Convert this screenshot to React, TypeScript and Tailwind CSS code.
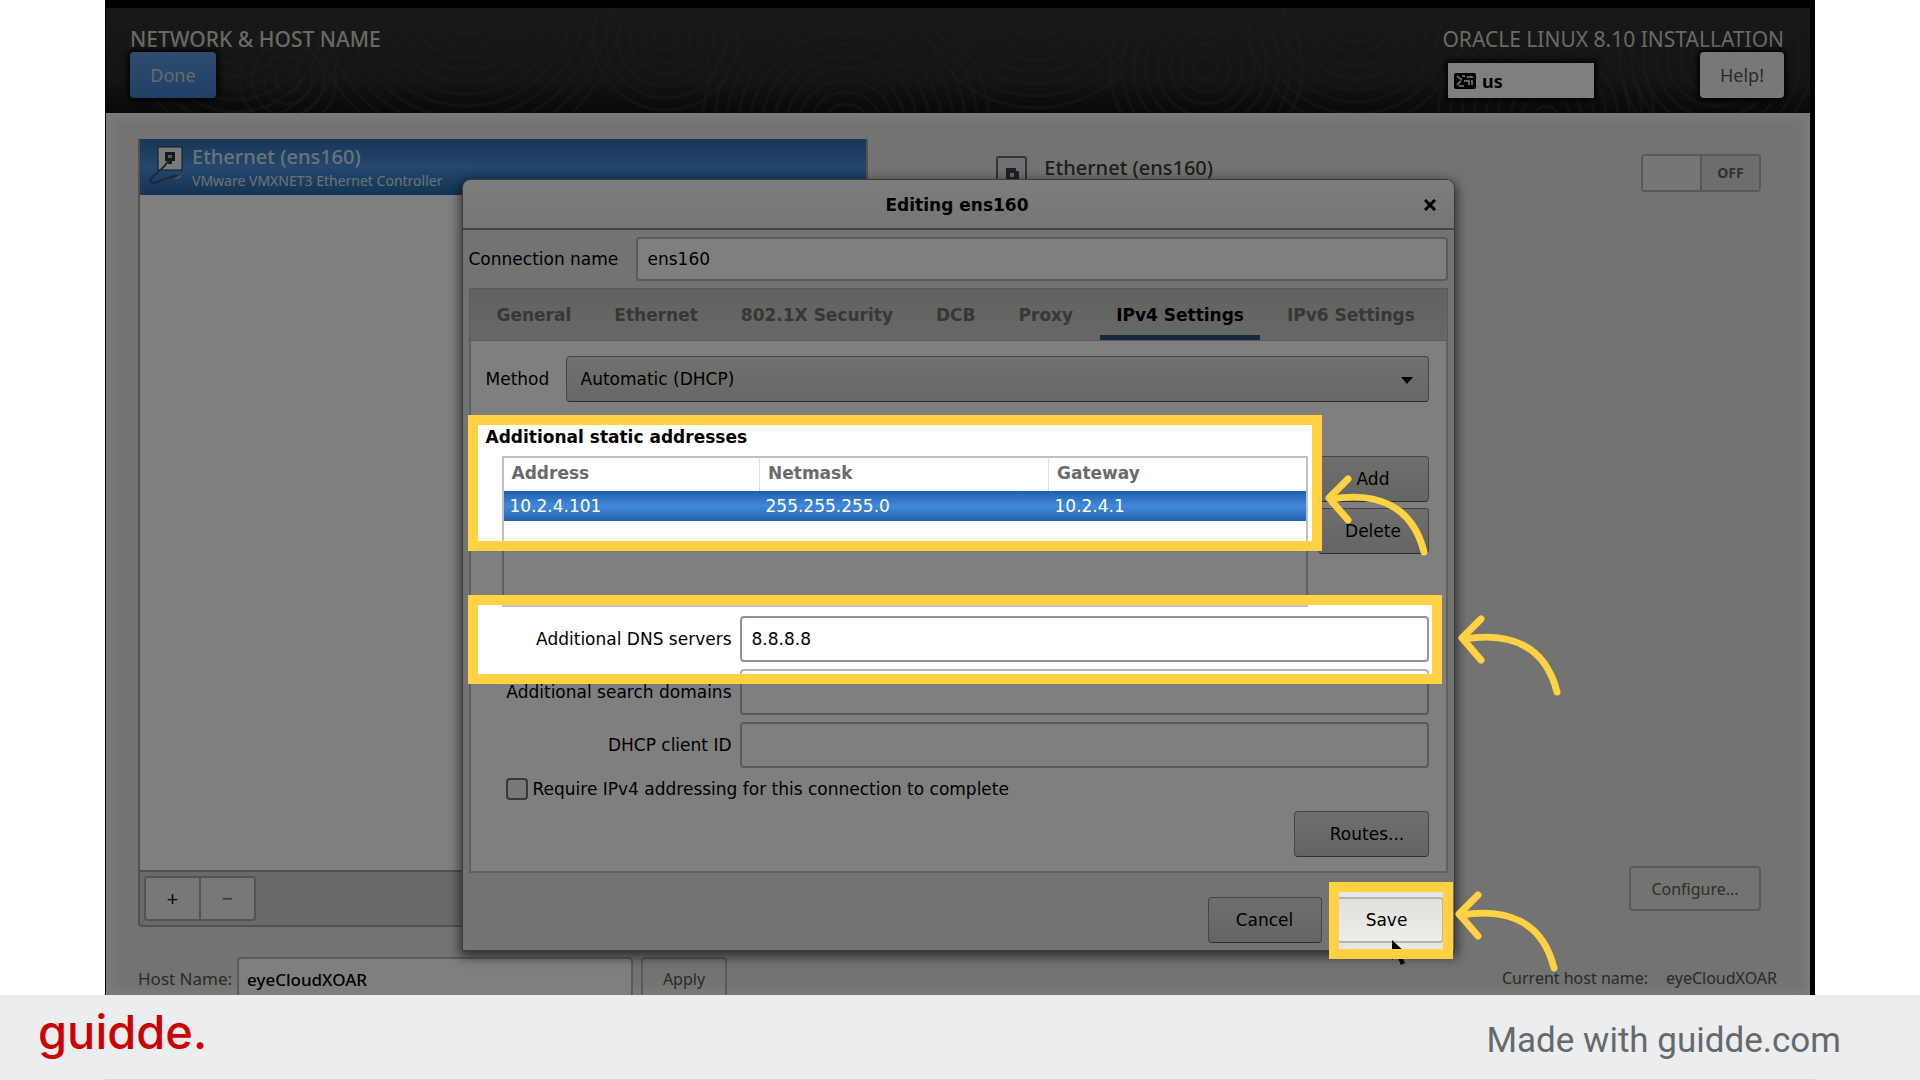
import React from 'react';

type Box = { id: string; left: number; top: number; width: number; height: number; arrowLeft: number; arrowTop: number };

// Horizontal values are measured from the centre of the screen
const highlights: Box[] = [
  { id: 'addresses', left: -492, top: 415, width: 854, height: 136, arrowLeft: 365, arrowTop: 474 },
  { id: 'dns', left: -492, top: 595, width: 974, height: 89, arrowLeft: 498, arrowTop: 614 },
  { id: 'save', left: 369, top: 882, width: 124, height: 77, arrowLeft: 495, arrowTop: 890 },
];

const tabs = ['General', 'Ethernet', '802.1X Security', 'DCB', 'Proxy', 'IPv4 Settings', 'IPv6 Settings'];

const addresses = [{ address: '10.2.4.101', netmask: '255.255.255.0', gateway: '10.2.4.1' }];

const rings = [
  { cx: 130, cy: 20, count: 9 },
  { cx: 182, cy: 72, count: 4 },
  { cx: 360, cy: -10, count: 13 },
  { cx: 560, cy: 30, count: 6 },
  { cx: 740, cy: 120, count: 12 },
  { cx: 930, cy: -20, count: 10 },
  { cx: 1100, cy: 60, count: 8 },
  { cx: 1250, cy: 10, count: 9 },
  { cx: 1440, cy: 110, count: 9 },
  { cx: 1610, cy: 50, count: 8 },
];

const holes = highlights
  .map((b) => {
    const l = `calc(50% + ${b.left}px)`;
    const r = `calc(50% + ${b.left + b.width}px)`;
    const t = `${b.top}px`;
    const bt = `${b.top + b.height}px`;
    return `${l} ${t}, ${r} ${t}, ${r} ${bt}, ${l} ${bt}, ${l} ${t}, 0 0`;
  })
  .join(', ');

const dimClip = `polygon(evenodd, 0 0, 100% 0, 100% 100%, 0 100%, 0 0, ${holes})`;

const dialogButton =
  'h-[46px] rounded border border-[#8a8a86] border-b-[#5c5c58] bg-linear-to-b from-[#dededb] to-[#c9c9c5] text-center text-black';

const field = 'w-full rounded border-2 border-[#b4b4b0] bg-white px-2.5 text-black outline-none';

const EthernetIcon: React.FC = () => (
  <svg className="mt-1 h-12 w-10 shrink-0" viewBox="0 0 40 48" fill="none">
    <rect x="12" y="4" width="24" height="23" fill="#f4f4f0" stroke="#20303c" strokeWidth="1" />
    <path d="M19 9h10v9h-3v3h-4v-3h-3z" fill="#26323a" />
    <path d="M22 12h4v3h-4z" fill="#aab4ba" />
    <path d="M22 18C17 28 5 32 4 38c0 4 8 1 15-2s11-4 16-2" stroke="#3c5368" strokeWidth="2" />
    <path d="M29 36l6-3" stroke="#8fa9be" strokeWidth="2" />
  </svg>
);

const PortIcon: React.FC = () => (
  <svg className="h-10 w-9 shrink-0" viewBox="0 0 36 40" fill="none">
    <path d="M3 40V5q0-2 2-2h25q2 0 2 2v35" fill="#e2e2de" stroke="#6a6a66" strokeWidth="2" />
    <path d="M12 28V14h10v3h3v11" fill="#39424e" />
    <path d="M16 19h4v4h-4z" fill="#c5ccd4" />
  </svg>
);

const Arrow: React.FC = () => (
  <svg className="h-[84px] w-[104px]" viewBox="0 0 104 84" fill="none" stroke="#ffd143" strokeLinecap="round" strokeLinejoin="round">
    <path d="M23 5L4 24L23 46" strokeWidth="7" />
    <path d="M6 25C50 18 87 30 99 78" strokeWidth="7" />
  </svg>
);

const Header: React.FC = () => (
  <header className="relative flex h-[105px] shrink-0 justify-between bg-linear-to-b from-[#32312d] via-[#292825] via-70% to-[#131211] pr-[26px] pl-6 text-[#d2d2d2]">
    <svg className="absolute inset-0 h-full w-full" fill="none" stroke="#3b3a36" strokeWidth="3" aria-hidden="true">
      {rings.map((r) =>
        Array.from({ length: r.count }, (_, i) => (
          <circle key={`${r.cx}-${i}`} cx={r.cx} cy={r.cy} r={12 + i * 12} opacity="0.4" />
        ))
      )}
    </svg>
    <div className="relative flex flex-col items-start pt-4">
      <h1 className="h-7 text-[21px] leading-[30px] font-medium">NETWORK &amp; HOST NAME</h1>
      <button className="h-[46px] w-[86px] rounded-sm bg-linear-to-b from-[#5c9be0] to-[#3f82cc] text-lg shadow-[0_0_6px_2px_#000]">
        Done
      </button>
    </div>
    <div className="relative flex w-[336px] flex-col pt-4">
      <div className="flex h-7 justify-end text-[21px] leading-[30px] whitespace-nowrap">ORACLE LINUX 8.10 INSTALLATION</div>
      <div className="flex items-end justify-between">
        <button className="flex h-[35px] w-[146px] items-center gap-1.5 bg-white pl-1.5 text-lg font-bold text-black shadow-[0_0_6px_2px_#000]">
          <svg className="h-4 w-[22px]" viewBox="0 0 22 16" fill="none">
            <rect width="22" height="16" rx="2" fill="#000" />
            <path d="M3 3l5 4M3 12l4-4M8 3h3M13 4h6M10 8h5v4M18 7v5M5 13h5" stroke="#ccc" strokeWidth="2" />
          </svg>
          us
        </button>
        <button className="h-[46px] w-[84px] rounded-sm bg-[#f0f0ee] text-lg text-[#55554f] shadow-[0_0_6px_2px_#000]">
          Help!
        </button>
      </div>
    </div>
  </header>
);

const NetworkPage: React.FC = () => (
  <main className="flex min-h-0 flex-1 flex-col bg-[#e6e6e2] pt-[26px] pr-[49px] pl-8 text-[#3c3c3a] shadow-[inset_0_0_12px_4px_#fafafa]">
    <div className="flex min-h-0 flex-1 gap-[126px]">
      <section className="flex w-[45%] flex-col">
        <ul className="flex-1 border-x-2 border-[#a2a29e] bg-white">
          <li className="flex h-14 items-start gap-1.5 bg-linear-to-b from-[#2f6cb0] via-[#488fdc] to-[#2a66a8] pl-1.5 text-[#d8e4ee]">
            <EthernetIcon />
            <div>
              <div className="mt-1 h-7 text-xl leading-7 font-medium">Ethernet (ens160)</div>
              <div className="text-sm leading-5">VMware VMXNET3 Ethernet Controller</div>
            </div>
          </li>
        </ul>
        <div className="h-[57px] rounded-b border-2 border-[#a2a29e] bg-[#d2d2ce] p-1">
          <div className="flex h-[45px] w-28 rounded border-2 border-[#a8a8a4] bg-[#f0f0ee] text-xl text-black">
            <button className="flex-1 border-r-2 border-[#a8a8a4]" aria-label="Add device">+</button>
            <button className="flex-1 text-[#70706c]" aria-label="Remove device">−</button>
          </div>
        </div>
      </section>
      <section className="flex flex-1 flex-col justify-between">
        <div className="flex items-start justify-between pt-[15px]">
          <div className="flex gap-3.5">
            <PortIcon />
            <h2 className="text-xl leading-7 font-medium">Ethernet (ens160)</h2>
          </div>
          <button
            role="switch"
            aria-checked="false"
            aria-label="Ethernet (ens160)"
            className="flex h-[38px] w-[120px] rounded-sm border-2 border-[#b0b0ac] text-sm font-bold text-[#63635f]"
          >
            <span className="h-full flex-1 border-r-2 border-[#b0b0ac] bg-[#ececea]"></span>
            <span className="flex h-full flex-1 items-center justify-center bg-[#dadad6]">OFF</span>
          </button>
        </div>
        <button className="mb-4 h-[45px] w-[132px] self-end rounded border-2 border-[#b4b4b0] text-base text-[#5c5c58]">
          Configure...
        </button>
      </section>
    </div>
    <div className="-mr-6 mt-[30px] flex h-[38px] items-start overflow-hidden text-base text-[#55554f]">
      <label htmlFor="hostname" className="w-[99px] text-[17px] leading-[43px]">
        Host Name:
      </label>
      <input
        id="hostname"
        defaultValue="eyeCloudXOAR"
        className="h-11 w-[396px] rounded border-2 border-[#b4b4b0] bg-white px-2 text-[17px] font-medium text-black outline-none"
      />
      <button className="ml-2 h-11 w-[86px] rounded border-2 border-[#b4b4b0]">Apply</button>
      <div className="mr-2 ml-auto flex gap-[18px] leading-[43px]">
        <span>Current host name:</span>
        <span>eyeCloudXOAR</span>
      </div>
    </div>
  </main>
);

const EditDialog: React.FC = () => (
  <div
    role="dialog"
    aria-labelledby="dialog-title"
    className="w-[991px] rounded-t-lg bg-[#e6e6e2] font-['DejaVu_Sans',sans-serif] text-[17px] leading-6 text-black shadow-[0_4px_12px_3px_rgba(0,0,0,0.6)] ring-1 ring-[#777]"
  >
    <div className="flex h-[50px] items-center rounded-t-lg border-b-2 border-[#8a8a86] bg-linear-to-b from-[#fafafa] to-[#ececea] px-4 pt-0.5">
      <h2 id="dialog-title" className="flex-1 pl-3.5 text-center font-bold">
        Editing ens160
      </h2>
      <button aria-label="Close" className="flex h-6 w-4 items-center justify-center">
        <svg className="h-3 w-3" viewBox="0 0 12 12" stroke="#000" strokeWidth="3">
          <path d="M1 1l10 10M11 1L1 11" />
        </svg>
      </button>
    </div>

    <div className="px-1.5 pt-[7px]">
      <div className="flex items-center">
        <label htmlFor="connection" className="w-[167px] shrink-0">
          Connection name
        </label>
        <input id="connection" defaultValue="ens160" className={`${field} h-11`} />
      </div>

      <div role="tablist" className="mt-[7px] flex h-[53px] gap-[11px] border border-[#b4b4b0] bg-linear-to-b from-[#c4c4c0] to-[#d0d0cc] px-[11px] font-bold text-[#6e6e6a]">
        {tabs.map((tab) => {
          const active = tab === 'IPv4 Settings';
          return (
            <button
              key={tab}
              role="tab"
              aria-selected={active}
              className={`border-b-[5px] px-4 pt-1.5 whitespace-nowrap ${active ? 'border-[#2c5382] text-black' : 'border-transparent'}`}
            >
              {tab}
            </button>
          );
        })}
      </div>

      <div className="border-x-2 border-b-2 border-[#c0c0bc] bg-white pt-[15px] pr-[17px] pb-3.5 pl-[15px]">
        <div className="flex items-center">
          <label htmlFor="method" className="w-20 shrink-0">
            Method
          </label>
          <div className="relative flex-1">
            <select
              id="method"
              className="h-[46px] w-full appearance-none rounded border border-[#8a8a86] border-b-[#5c5c58] bg-linear-to-b from-[#e2e2df] to-[#cfcfcb] px-3.5 text-black outline-none"
            >
              <option>Automatic (DHCP)</option>
            </select>
            <svg className="pointer-events-none absolute top-5 right-4 h-2 w-3" viewBox="0 0 12 8">
              <path d="M0 1h12L6 8z" fill="#000" />
            </svg>
          </div>
        </div>

        <h3 className="mt-[23px] font-bold">Additional static addresses</h3>
        <div className="mt-[7px] ml-4 flex items-start gap-2.5">
          <div className="h-[151px] flex-1 border-2 border-[#c0c0bc]">
            <table className="w-full table-fixed border-collapse text-left">
              <thead className="text-[#6a6a6a]">
                <tr className="h-[33px]">
                  <th className="w-[256px] pb-1 pl-2 leading-4">Address</th>
                  <th className="w-[289px] border-l border-[#dcdcdc] pb-1 pl-2 leading-4">Netmask</th>
                  <th className="border-l border-[#dcdcdc] pb-1 pl-2 leading-4">Gateway</th>
                </tr>
              </thead>
              <tbody>
                {addresses.map((row) => (
                  <tr key={row.address} className="h-[30px] bg-linear-to-b from-[#1e5fab] via-[#4189dc] to-[#2463ac] text-white">
                    <td className="pl-1.5 leading-4">{row.address}</td>
                    <td className="pl-1.5 leading-4">{row.netmask}</td>
                    <td className="pl-1.5 leading-4">{row.gateway}</td>
                  </tr>
                ))}
              </tbody>
            </table>
          </div>
          <div className="flex w-[111px] flex-col gap-1.5">
            <button className={dialogButton}>Add</button>
            <button className={dialogButton}>Delete</button>
          </div>
        </div>

        <div className="mt-[9px] grid grid-cols-[246px_1fr] items-center gap-x-2 gap-y-[7px]">
          <label htmlFor="dns" className="text-right">Additional DNS servers</label>
          <input id="dns" defaultValue="8.8.8.8" className="h-[46px] w-full rounded border-2 border-[#8c9499] bg-white px-2.5 text-black outline-none" />
          <label htmlFor="search" className="text-right">Additional search domains</label>
          <input id="search" className={`${field} h-[46px]`} />
          <label htmlFor="client" className="text-right">DHCP client ID</label>
          <input id="client" className={`${field} h-[46px]`} />
        </div>

        <div className="mt-2.5 ml-5 flex h-[22px] items-center gap-[5px]">
          <input id="require" type="checkbox" className="h-[22px] w-[22px] appearance-none rounded border-2 border-[#70706c] bg-[#f0f0ee]" />
          <label htmlFor="require">Require IPv4 addressing for this connection to complete</label>
        </div>

        <div className="mt-[11px] flex justify-end">
          <button className={`${dialogButton} w-[135px] pl-3`}>Routes...</button>
        </div>
      </div>
    </div>

    <div className="flex justify-end gap-2 pt-6 pr-2.5 pb-[7px]">
      <button className={`${dialogButton} w-[114px]`}>Cancel</button>
      <button className="h-[46px] w-[114px] rounded border-2 border-[#b4b4b0] bg-linear-to-b from-[#e0e0dc] to-[#ececea] text-black">
        Save
      </button>
    </div>
  </div>
);

const Annotations: React.FC = () => (
  <div className="pointer-events-none absolute inset-0">
    <div className="absolute inset-0 bg-black/50" style={{ clipPath: dimClip }}></div>
    {highlights.map((b) => (
      <div key={b.id}>
        <div
          className="absolute border-10 border-[#ffd143]"
          style={{ left: `calc(50% + ${b.left}px)`, top: b.top, width: b.width, height: b.height }}
        ></div>
        <div className="absolute" style={{ left: `calc(50% + ${b.arrowLeft}px)`, top: b.arrowTop }}>
          <Arrow />
        </div>
      </div>
    ))}
  </div>
);

const App: React.FC = () => {
  return (
    <div className="flex h-screen flex-col bg-white">
      <div className="relative mx-[105px] flex min-h-0 flex-1 flex-col overflow-hidden border-t-8 border-r-[5px] border-l border-black font-['Noto_Sans',sans-serif]">
        <Header />
        <NetworkPage />
        <div className="absolute inset-x-0 top-[172px] flex justify-center">
          <div className="relative">
            <EditDialog />
            <svg className="absolute right-[46px] -bottom-4 h-[26px] w-4" viewBox="0 0 16 26">
              <path d="M0 0v20l5-4 4 9 4-2-4-8h7z" fill="#000" />
            </svg>
          </div>
        </div>
        <div className="absolute -top-2 -right-[5px] bottom-0 -left-px">
          <Annotations />
        </div>
      </div>
      <footer className="relative flex h-[85px] shrink-0 items-center justify-between bg-[#ecedef] pr-[79px] pl-[38px]">
        <div className="pb-3 font-['Inter',sans-serif] text-[47px] leading-none font-medium text-[#cc0000]">guidde.</div>
        <div className="pt-2 font-['Roboto',sans-serif] text-[35px] text-[#66696c]">Made with guidde.com</div>
        <div className="absolute inset-x-[105px] bottom-0 h-px bg-[#d8d9dc]"></div>
      </footer>
    </div>
  );
};

export default App;
